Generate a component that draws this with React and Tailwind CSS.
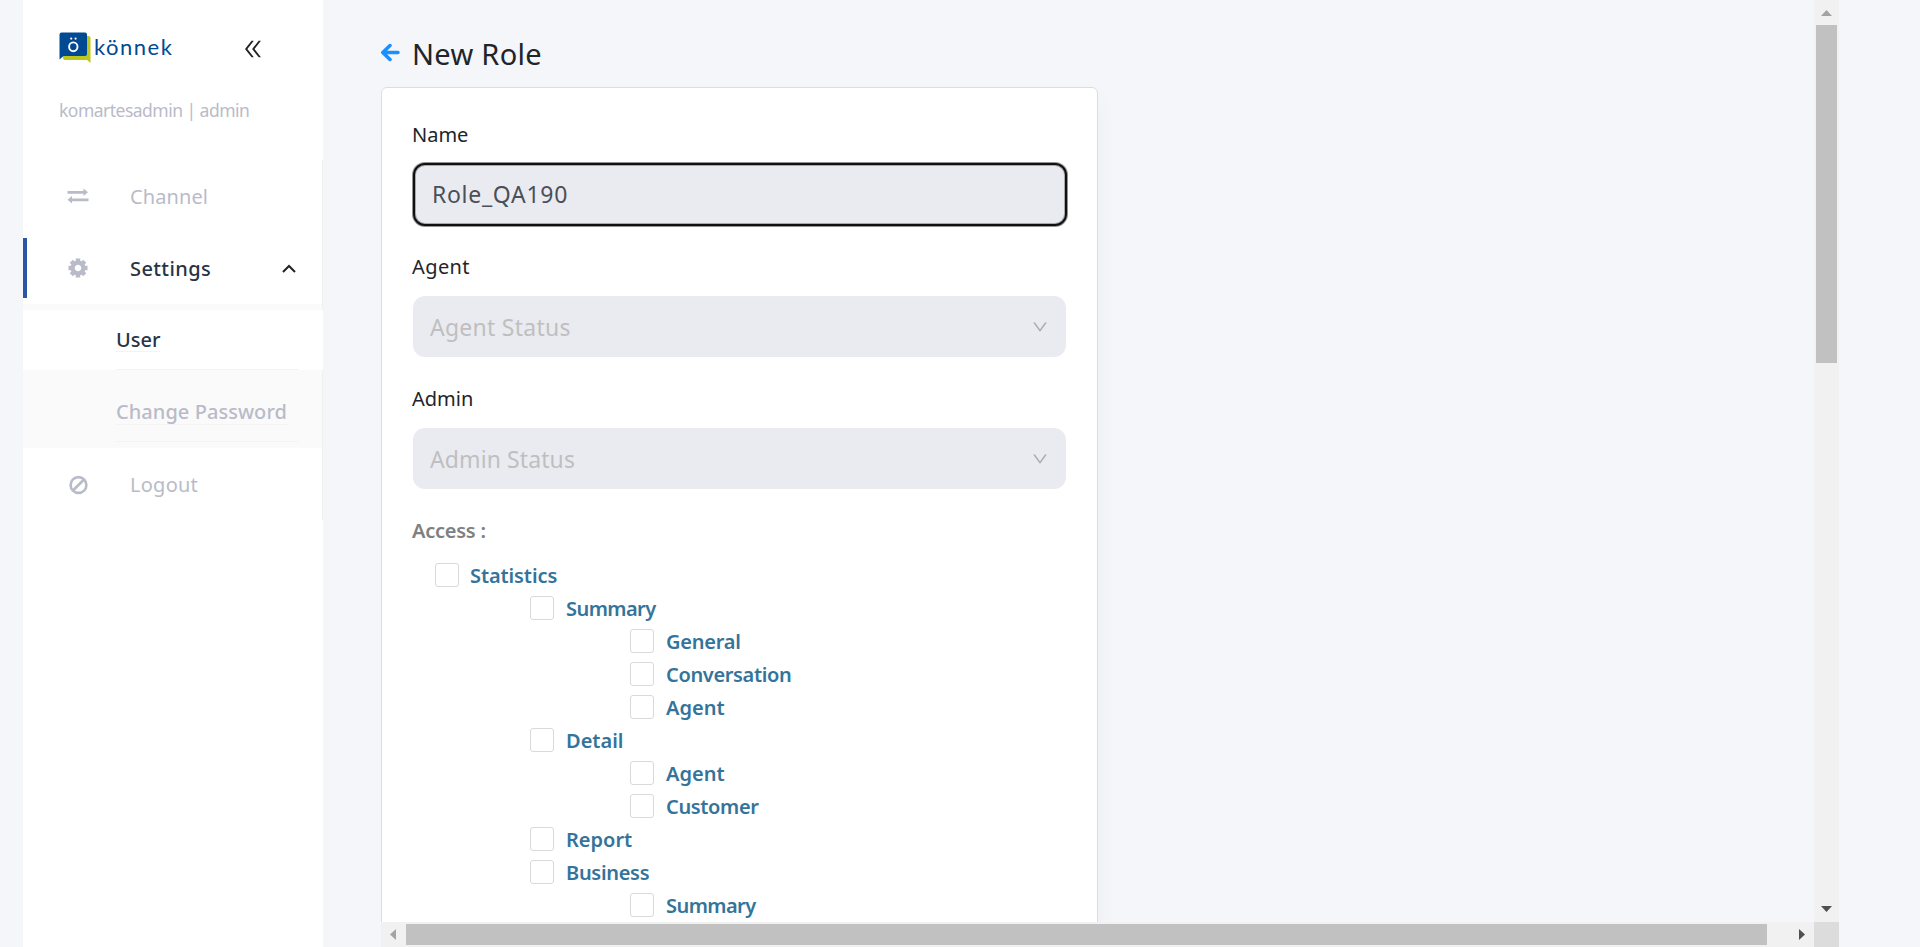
import { AiOutlineDoubleLeft, AiOutlineDown } from "react-icons/ai";

function Logo() {
  return (
    <div className="flex h-[34px] items-start">
      <svg width="34" height="34" viewBox="0 0 34 34" className="shrink-0">
        <path d="M5 4H29.500q2 0 2 2V31L28 28H6q-2 0-2-2Z" fill="#bdc61c" />
        <path d="M2.500 .500H26q2 0 2 2V22q0 2-2 2H4.500L.500 27.500V2.500q0-2 2-2Z" fill="#004a94" />
        <ellipse cx="14.300" cy="14.800" rx="4.200" ry="4.400" fill="none" stroke="#fff" strokeWidth="1.900" />
        <circle cx="12.200" cy="6.600" r="1.100" fill="#fff" />
        <circle cx="16.600" cy="6.600" r="1.100" fill="#fff" />
      </svg>
      <span className="ml-[1px] mt-px font-[Lato] text-[22px] leading-[28px] tracking-[1.500px] text-[#004a94]">könnek</span>
    </div>
  );
}

function Exchange() {
  return (
    <svg width="22" height="16" viewBox="0 0 22 16" fill="#b9bbc8">
      <path d="M.5 2.900H16.500V.500L21 4.300 16.500 8.100V5.700H.500Z" />
      <path d="M21.500 10.400H5V8L.500 11.800 5 15.600V13.200H21.500Z" />
    </svg>
  );
}

function Gear() {
  return (
    <svg width="20" height="20" viewBox="-10 -10 20 20" fill="none" stroke="#b9bbc8">
      <circle r="5.400" strokeWidth="4.200" />
      <path strokeWidth="4.400" d="M0-6V-9.500M0 6V9.500M-6 0H-9.500M6 0H9.500M-4.500-4.500-6.700-6.700M4.500 4.500 6.700 6.700M-4.500 4.500-6.700 6.700M4.500-4.500 6.700-6.700" />
    </svg>
  );
}

function Ban() {
  return (
    <svg width="20" height="20" viewBox="0 0 20 20" className="mt-px" fill="none" stroke="#b9bbc8" strokeWidth="2.600">
      <circle cx="10.500" cy="10" r="7.900" />
      <path d="M5 15.500 16 4.500" />
    </svg>
  );
}

function Select({ label, placeholder, labelTracking, tracking }) {
  return (
    <div className="h-[132px]">
      <div className={"h-[43px] text-[20px] leading-[27px] " + labelTracking}>{label}</div>
      <div className="ml-px flex h-[61px] w-[653px] items-center justify-between rounded-[12px] bg-[#eaebf1] pl-[17px] pr-[17px]">
        <span className={"pt-px text-[23px] text-[#bfbfbf] " + tracking}>{placeholder}</span>
        <AiOutlineDown size={18} color="#a9aaae" />
      </div>
    </div>
  );
}

const access = [
  ["Statistics", "pl-[23px]", "ml-[11px] tracking-[-0.100px]"],
  ["Summary", "pl-[118px]", "ml-[12px] tracking-[-0.550px]"],
  ["General", "pl-[218px]", "ml-[12px] tracking-[-0.250px]"],
  ["Conversation", "pl-[218px]", "ml-[12px] tracking-[-0.350px]"],
  ["Agent", "pl-[218px]", "ml-[12px] tracking-[0px]"],
  ["Detail", "pl-[118px]", "ml-[12px] tracking-[0px]"],
  ["Agent", "pl-[218px]", "ml-[12px] tracking-[0px]"],
  ["Customer", "pl-[218px]", "ml-[12px] tracking-[-0.350px]"],
  ["Report", "pl-[118px]", "ml-[12px] tracking-[0px]"],
  ["Business", "pl-[118px]", "ml-[12px] tracking-[-0.300px]"],
  ["Summary", "pl-[218px]", "ml-[12px] tracking-[-0.550px]"],
];

function Sidebar() {
  return (
    <aside className="flex h-full w-[300px] shrink-0 flex-col bg-white text-[#b9bbc8]">
      <div className="flex h-[104px] items-start justify-between pl-[36px] pr-[58px] pt-[32px]">
        <Logo />
        <AiOutlineDoubleLeft size={24} color="#222" className="mt-[5px]" />
      </div>
      <div className="h-[56px] pl-[36px] text-[17.500px] leading-[12px] tracking-[-0.520px]">komartesadmin | admin</div>
      <nav className="h-[360px] text-[20px]">
        <div className="flex h-[72px] items-center border-r border-[#f0f0f0] pl-[44px]">
          <Exchange />
          <span className="ml-[41px] pt-[2px] tracking-[0.100px]">Channel</span>
        </div>
        <div className="flex h-[72px] border-r border-[#f0f0f0] pt-[6px]">
          <div className="flex h-[60px] w-full items-center border-l-4 border-[#2b55a5] pl-[41px] pr-[26px]">
            <Gear />
            <span className="ml-[42px] pt-[2px] font-medium tracking-[0.400px] text-[#263544]">Settings</span>
            <svg width="14" height="10" viewBox="0 0 14 10" className="ml-auto mt-px" fill="none" stroke="#222" strokeWidth="2">
              <path d="M1 8 7 2l6 6" />
            </svg>
          </div>
        </div>
        <div className="h-[6px] border-r border-[#f0f0f0] bg-[#fafafa]" />
        <div className="h-[60px] bg-white pl-[93px] pr-[24px] font-medium">
          <div className="flex h-full items-center border-b border-[#f3f3f3] text-[#263544]">
            <span className="border-b border-[#f3f3f3] leading-[23px]">User</span>
          </div>
        </div>
        <div className="h-[78px] border-r border-[#f0f0f0] bg-[#fafafa] pl-[93px] pr-[23px] font-medium">
          <div className="flex h-[72px] items-center border-b border-[#f3f3f3] pt-[13px]">
            <span className="border-b border-[#f3f3f3] leading-[24px] tracking-[0.050px]">Change Password</span>
          </div>
        </div>
        <div className="flex h-[72px] items-center border-r border-[#f0f0f0] pl-[45px]">
          <Ban />
          <span className="ml-[42px] pt-[2px] tracking-[0.250px]">Logout</span>
        </div>
      </nav>
    </aside>
  );
}

export default function App() {
  return (
    <div className="flex h-[947px] w-[1920px] overflow-hidden bg-[#f4f6fa] pl-[23px] font-['Noto_Sans',sans-serif]">
      <Sidebar />
      <div className="ml-[58px] grid h-full w-[1458px] grid-cols-[1433px_25px] grid-rows-[922px_25px]">
        <main className="overflow-hidden text-[#212529]">
          <div className="flex h-[87px] items-center pt-[20px]">
            <svg width="20" height="20" viewBox="0 0 20 20" className="-mt-[2px]" fill="none" stroke="#1890ff" strokeWidth="3.500" strokeLinecap="round" strokeLinejoin="round">
              <path d="M17 9.500H2M9 2.500 1.800 9.500 9 16.500" />
            </svg>
            <h1 className="ml-[11px] text-[29px] tracking-[0.300px]">New Role</h1>
          </div>
          <section className="h-[1200px] w-[717px] rounded-[6px] border border-[#dcdddf] bg-white pl-[30px] pt-[33px] shadow-[0_15px_25px_rgba(0,0,0,0.04)]">
            <div className="h-[132px]">
              <div className="h-[42px] text-[20px] leading-[27px]">Name</div>
              <div className="ml-px flex h-[63px] w-[654px] items-center rounded-[12px] border-2 border-[#101010] bg-[#eaebf1] pl-[17px] text-[23px] tracking-[0.700px] text-[#495057] shadow-[0_0_0_1px_rgba(16,16,16,0.45),inset_0_0_0_1px_rgba(16,16,16,0.3)]">Role_QA190</div>
            </div>
            <Select label="Agent" placeholder="Agent Status" labelTracking="tracking-[0.400px]" tracking="tracking-[0.250px]" />
            <Select label="Admin" placeholder="Admin Status" labelTracking="tracking-[0px]" tracking="tracking-[0.100px]" />
            <div className="h-[46px] text-[20px] font-semibold leading-[28px] tracking-[-0.250px] text-[#808080]">Access :</div>
            {access.map(([name, indent, textClass], i) => (
              <div key={i} className={"flex h-[33px] items-start " + indent}>
                <span className="h-[24px] w-[24px] rounded-[3px] border border-[#d9d9d9] bg-white" />
                <span className={"text-[20px] font-semibold leading-[25px] text-[#34749a] " + textClass}>{name}</span>
              </div>
            ))}
          </section>
        </main>
        <div className="flex flex-col items-center bg-[#f1f1f1]">
          <div className="flex h-[25px] items-center">
            <svg width="11" height="6" viewBox="0 0 11 6"><path d="M0 6 5.500 0 11 6Z" fill="#a3a3a3" /></svg>
          </div>
          <div className="h-[338px] w-[21px] bg-[#c1c1c1]" />
          <div className="mt-auto flex h-[25px] items-center pb-[2px]">
            <svg width="11" height="6" viewBox="0 0 11 6"><path d="M0 0H11L5.500 6Z" fill="#505050" /></svg>
          </div>
        </div>
        <div className="flex items-center bg-[#f1f1f1]">
          <div className="flex w-[25px] justify-center pr-px">
            <svg width="6" height="11" viewBox="0 0 6 11"><path d="M6 0V11L0 5.500Z" fill="#a3a3a3" /></svg>
          </div>
          <div className="h-[21px] w-[1361px] bg-[#c1c1c1]" />
          <div className="ml-auto flex w-[25px] justify-center">
            <svg width="6" height="11" viewBox="0 0 6 11"><path d="M0 0V11L6 5.500Z" fill="#505050" /></svg>
          </div>
        </div>
        <div className="bg-[#dcdcdc]" />
      </div>
    </div>
  );
}
